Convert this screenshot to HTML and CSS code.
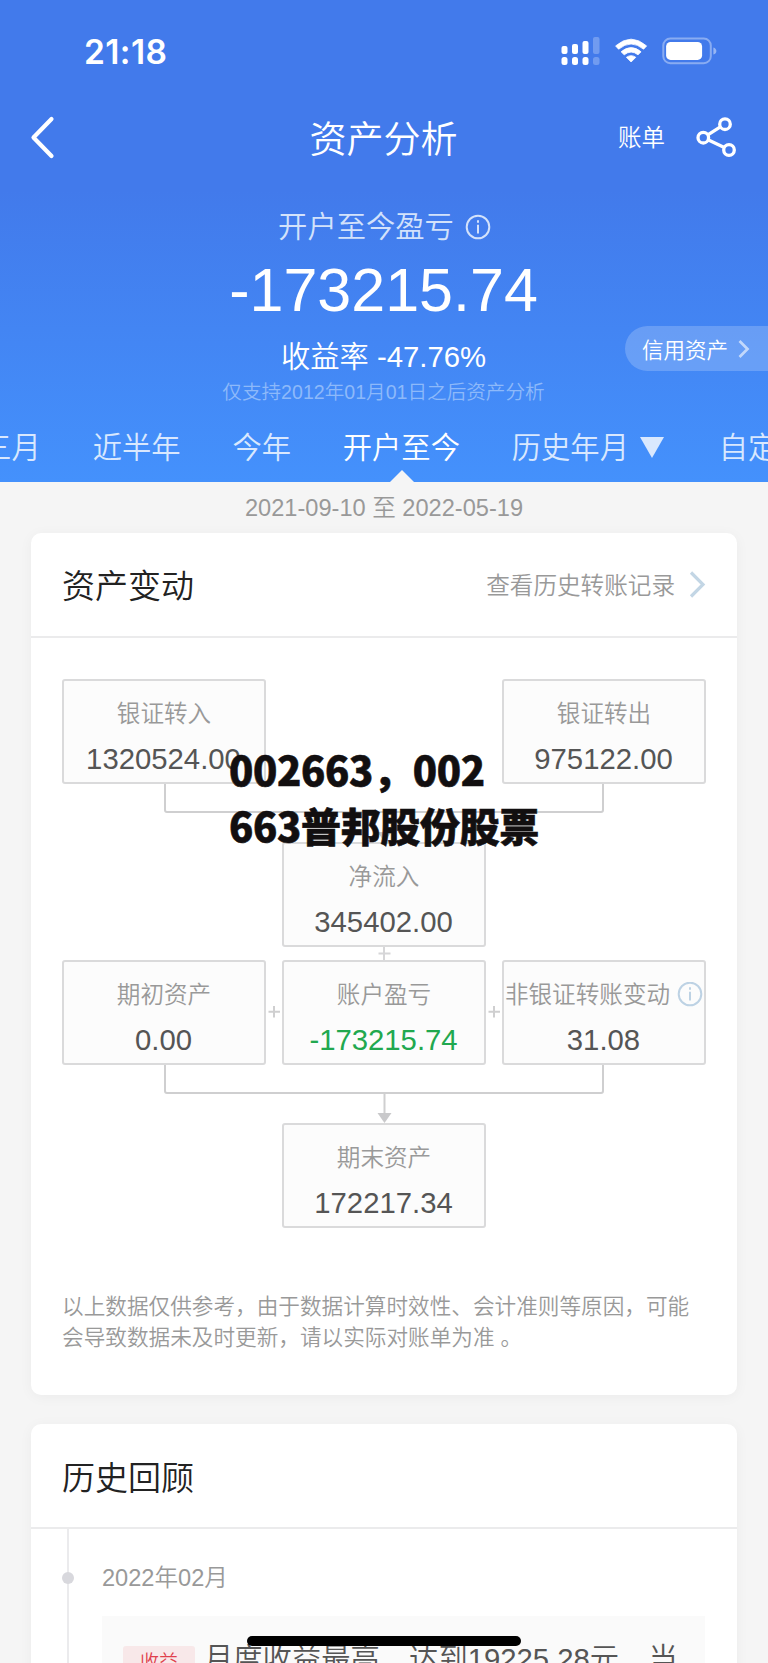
FILE: index.html
```html
<!DOCTYPE html>
<html lang="zh-CN">
<head>
<meta charset="utf-8">
<title>资产分析</title>
<link rel="stylesheet" href="styles.css">
</head>
<body>
<div class="screen">
  <header class="hero">
    <div class="status">
      <span class="time">21:18</span>
      <svg class="status-icons" width="156" height="30" viewBox="0 0 156 30" fill="#fff">
        <g><rect x="0.5" y="10" width="6" height="8" rx="2"/><rect x="11" y="8" width="6" height="10" rx="2"/><rect x="21.500" y="5" width="6" height="13" rx="2"/>
        <rect x="0.500" y="21" width="6" height="8" rx="2.500"/><rect x="11" y="21" width="6" height="8" rx="2.500"/><rect x="21.500" y="21" width="6" height="8" rx="2.500"/></g>
        <g opacity=".25"><rect x="32" y="1" width="6.500" height="17" rx="2"/><rect x="32" y="21" width="6.500" height="8" rx="2.500"/></g>
        <g transform="translate(.6 .4)">
        <path d="M54 9.500Q69.500-4 85 9.500L82 12.800Q69.500 2.400 57 12.800Z" stroke="#fff" stroke-width=".8" stroke-linejoin="round"/>
        <path d="M59.500 15.400Q69.500 7 79.500 15.400L76.400 18.400Q69.500 13 62.600 18.400Z" stroke="#fff" stroke-width=".8" stroke-linejoin="round"/>
        <path d="M64.800 20.900Q69.500 17.600 74.200 20.900L69.500 25.600Z" stroke="#fff" stroke-width=".8" stroke-linejoin="round"/>
        <rect x="101.700" y="2.200" width="47.500" height="24.600" rx="7" fill="none" stroke="#fff" stroke-opacity=".38" stroke-width="2"/>
        <rect x="104.500" y="5.500" width="36" height="18" rx="4.500"/>
        <path d="M151.800 11q3 1 3 3.600t-3 3.600z" opacity=".45"/>
        </g>
      </svg>
    </div>
    <nav class="nav">
      <svg class="back" width="26" height="44" viewBox="0 0 26 44" fill="none" stroke="#fff" stroke-width="4.200" stroke-linecap="round" stroke-linejoin="round"><path d="M22.500 3 4.500 21.500 22.500 40"/></svg>
      <h1>资产分析</h1>
      <div class="nav-actions">
        <span>账单</span>
        <svg width="42" height="42" viewBox="0 0 42 42" fill="none" stroke="#fff" stroke-width="3.300"><circle cx="8.300" cy="20.700" r="5.300"/><circle cx="30" cy="7.200" r="5.300"/><circle cx="34" cy="33" r="5.300"/><path d="M13.200 17.700 25 10.200M13.500 22.900 28.800 30.300"/></svg>
      </div>
    </nav>
    <div class="summary">
      <div class="label">开户至今盈亏 <svg width="26" height="26" viewBox="0 0 26 26" fill="none" stroke="currentColor" stroke-width="2"><circle cx="13" cy="13" r="11.300"/><path d="M13 10.800v8.700M13 6.200v2.600"/></svg></div>
      <div class="amount">-173215.74</div>
      <div class="rate">收益率 -47.76%</div>
      <div class="hint">仅支持2012年01月01日之后资产分析</div>
      <div class="pill">信用资产<svg width="12" height="20" viewBox="0 0 12 20" fill="none" stroke="#fff" stroke-opacity=".6" stroke-width="2.700"><path d="M1.500 2 9.500 10 1.500 18"/></svg></div>
    </div>
    <div class="tabs">
      <span>近三月</span><span>近半年</span><span>今年</span><span class="active">开户至今</span><span class="pick">历史年月<svg width="24" height="21" viewBox="0 0 24 21"><path d="M0 0h24L12 21z" fill="currentColor"/></svg></span><span class="custom">自定义</span>
    </div>
  </header>

  <div class="range">2021-09-10 至 2022-05-19</div>

  <section class="card changes">
    <div class="card-head">
      <h2>资产变动</h2>
      <span class="more">查看历史转账记录<svg width="17" height="28" viewBox="0 0 17 28" fill="none" stroke="#c3d6e5" stroke-width="3.200"><path d="M2 2.500 14 14.500 2 26.500"/></svg></span>
    </div>
    <div class="flow">
      <div class="row">
        <div class="node"><span>银证转入</span><b>1320524.00</b></div>
        <div class="node last"><span>银证转出</span><b>975122.00</b></div>
      </div>
      <svg class="link" width="644" height="58" viewBox="0 0 644 58"><path d="M103 0V26Q103 28 105 28H539Q541 28 541 26V0M322.500 28V52" fill="none" stroke="#cfcfd0" stroke-width="2"/><path d="M315.500 48h14l-7 10z" fill="#c9c9cb"/></svg>
      <div class="row">
        <div class="node mid"><span>净流入</span><b>345402.00</b></div>
      </div>
      <svg class="link" width="644" height="13" viewBox="0 0 644 13"><path d="M322 0V13M316.500 6.500h12" fill="none" stroke="#d6d6d8" stroke-width="2"/></svg>
      <div class="row">
        <div class="node"><span>期初资产</span><b>0.00</b></div>
        <svg class="plus" width="16" height="16" viewBox="0 0 16 16"><path d="M8 2v11.500M2.500 7.700h11.500" stroke="#cfcfd0" stroke-width="2"/></svg>
        <div class="node"><span>账户盈亏</span><b class="loss">-173215.74</b></div>
        <svg class="plus" width="16" height="16" viewBox="0 0 16 16"><path d="M8 2v11.500M2.500 7.700h11.500" stroke="#cfcfd0" stroke-width="2"/></svg>
        <div class="node"><span>非银证转账变动<svg width="26" height="26" viewBox="0 0 26 26" fill="none" stroke="#bdd2e4" stroke-width="2"><circle cx="13" cy="12" r="11.300"/><path d="M13 9.800v8.700M13 5.200v2.600"/></svg></span><b>31.08</b></div>
      </div>
      <svg class="link" width="644" height="58" viewBox="0 0 644 58"><path d="M103 0V26Q103 28 105 28H539Q541 28 541 26V0M322.500 28V52" fill="none" stroke="#cfcfd0" stroke-width="2"/><path d="M315.500 48h14l-7 10z" fill="#c9c9cb"/></svg>
      <div class="row">
        <div class="node mid"><span>期末资产</span><b>172217.34</b></div>
      </div>
    </div>
    <p class="note">以上数据仅供参考，由于数据计算时效性、会计准则等原因，可能<br>会导致数据未及时更新，请以实际对账单为准 。</p>
  </section>

  <section class="card history">
    <div class="card-head"><h2>历史回顾</h2></div>
    <div class="timeline">
      <div class="month">2022年02月</div>
      <div class="entry"><span class="tag">收益</span><span class="desc">月度收益最高，达到19225.28元，当</span></div>
    </div>
  </section>

  <div class="caption">002663，002<br>663普邦股份股票</div>
  <div class="home-bar"></div>
</div>
</body>
</html>
```
FILE: styles.css
```css
* { box-sizing: border-box; }
body { margin: 0; }
svg { display: block; flex: none; }
h1, h2, p { margin: 0; font-weight: 350; }

.screen {
  position: relative;
  width: 768px;
  height: 1663px;
  overflow: hidden;
  background: #f5f5f5;
  font-family: "Liberation Sans", "Noto Sans CJK SC", sans-serif;
  font-weight: 350;
  white-space: nowrap;
}

.hero {
  height: 482px;
  color: #fff;
  background: linear-gradient(#427aeb 0, #427aeb 190px, #4491fc 482px);
}
.status {
  display: flex;
  justify-content: space-between;
  align-items: center;
  height: 102px;
  padding: 0 51px 0 84px;
}
.time { padding-top: 1px; font: 600 33.500px/40px Inter, sans-serif; letter-spacing: .4px; }
.nav {
  display: grid;
  grid-template-columns: 1fr auto 1fr;
  align-items: center;
  height: 72px;
  padding: 0 31px 0 29px;
}
.nav h1 { padding: 6px 0 0 1px; font-size: 37px; line-height: 48px; }
.nav-actions {
  display: flex;
  justify-content: flex-end;
  align-items: center;
  gap: 30px;
  font-size: 23.500px;
  line-height: 32px;
}

.summary {
  position: relative;
  display: flex;
  flex-direction: column;
  align-items: center;
  height: 238px;
  padding-top: 33px;
}
.label {
  display: flex;
  align-items: center;
  gap: 11px;
  padding-left: 1px;
  font-size: 29.300px;
  line-height: 40px;
  color: #d3e2fb;
}
.amount { margin-top: 8px; padding-right: 1px; font-size: 61px; line-height: 70px; }
.rate { margin-top: 11px; padding-right: 1px; font-size: 29.300px; line-height: 42px; }
.hint { margin-top: 1px; padding-right: 1px; font-size: 19.600px; line-height: 26px; color: #8db9fa; }
.pill {
  position: absolute;
  top: 152px;
  right: 0;
  display: flex;
  align-items: center;
  gap: 10px;
  width: 143px;
  height: 45px;
  padding-left: 17px;
  border-radius: 23px 0 0 23px;
  background: rgba(255, 255, 255, .2);
  font-size: 21.500px;
}

.tabs {
  display: flex;
  align-items: center;
  gap: 51.800px;
  height: 70px;
  margin-left: -47px;
  overflow: hidden;
  font-size: 29.300px;
  color: #d9e8fe;
}
.tabs span { position: relative; flex: none; height: 70px; line-height: 71px; }
.tabs .active { color: #fff; }
.tabs .active::after {
  content: "";
  position: absolute;
  left: 50%;
  bottom: 0;
  margin-left: -11px;
  border: 12px solid transparent;
  border-top: 0;
  border-bottom-color: #f5f5f5;
}
.tabs .pick { display: flex; align-items: center; gap: 11px; }
.tabs .custom { margin-left: 3px; }

.range {
  height: 51px;
  font-size: 23.600px;
  line-height: 53px;
  text-align: center;
  color: #999;
}

.card {
  margin: 0 31px;
  border-radius: 10px;
  background: #fff;
  box-shadow: 0 2px 14px rgba(0, 0, 0, .045);
}
.card-head {
  display: flex;
  justify-content: space-between;
  align-items: center;
  height: 105px;
  padding: 0 31px;
  border-bottom: 2px solid #ebebec;
}
.card-head h2 { font-size: 33px; color: #222; }
.changes .card-head { padding-bottom: 2px; }
.more {
  display: flex;
  align-items: center;
  gap: 14px;
  font-size: 23.600px;
  color: #999;
}
.changes { height: 862px; }
.flow { padding: 40.500px 31px 0; }
.row { display: flex; }
.link { width: 644px; }
.node {
  display: flex;
  flex-direction: column;
  align-items: center;
  width: 204px;
  height: 105px;
  padding-top: 17px;
  border: 2px solid #dadadb;
  border-radius: 3px;
  background: #fcfcfc;
}
.node span {
  display: flex;
  align-items: center;
  gap: 7px;
  height: 32px;
  font-size: 23.600px;
  line-height: 32px;
  color: #999;
}
.node b { margin-top: 12px; padding-right: 1px; font-size: 29.300px; font-weight: 400; line-height: 34px; color: #555; }
.node .loss { color: #21a84f; }
.node.last { margin-left: auto; }
.node.mid { margin: 0 auto; }
.plus { align-self: center; }
.note {
  padding: 63px 31px 0;
  font-size: 21.630px;
  line-height: 31.500px;
  color: #999;
}

.history { height: 300px; margin-top: 29px; }
.timeline {
  position: relative;
  height: 195px;
  padding: 32px 32px 0 71px;
}
.timeline::before {
  content: "";
  position: absolute;
  left: 36px;
  top: 0;
  bottom: 0;
  width: 2px;
  background: #ebebed;
}
.month { position: relative; font-size: 23.600px; line-height: 34px; color: #999; }
.month::before {
  content: "";
  position: absolute;
  left: -40px;
  top: 11px;
  width: 12px;
  height: 12px;
  border-radius: 50%;
  background: #d8d8dd;
}
.entry {
  display: flex;
  align-items: flex-start;
  gap: 9px;
  height: 120px;
  margin-top: 21px;
  padding: 23px 0 0 21px;
  background: #fafafa;
}
.tag {
  width: 72px;
  height: 34px;
  margin-top: 7px;
  border-radius: 3px;
  background: #f8e8e9;
  font-size: 19px;
  line-height: 34px;
  text-align: center;
  color: #e0404c;
}
.desc { font-size: 29.300px; line-height: 40px; color: #555; }

.caption {
  position: absolute;
  left: 229px;
  top: 741px;
  font: 900 40px/56px "Noto Sans CJK SC", sans-serif;
  letter-spacing: -.35px;
  -webkit-text-stroke: .6px #120f10;
  color: #120f10;
}
.home-bar {
  position: absolute;
  left: 247px;
  top: 1636px;
  width: 274px;
  height: 10px;
  border-radius: 5px;
  background: #000;
}
```
